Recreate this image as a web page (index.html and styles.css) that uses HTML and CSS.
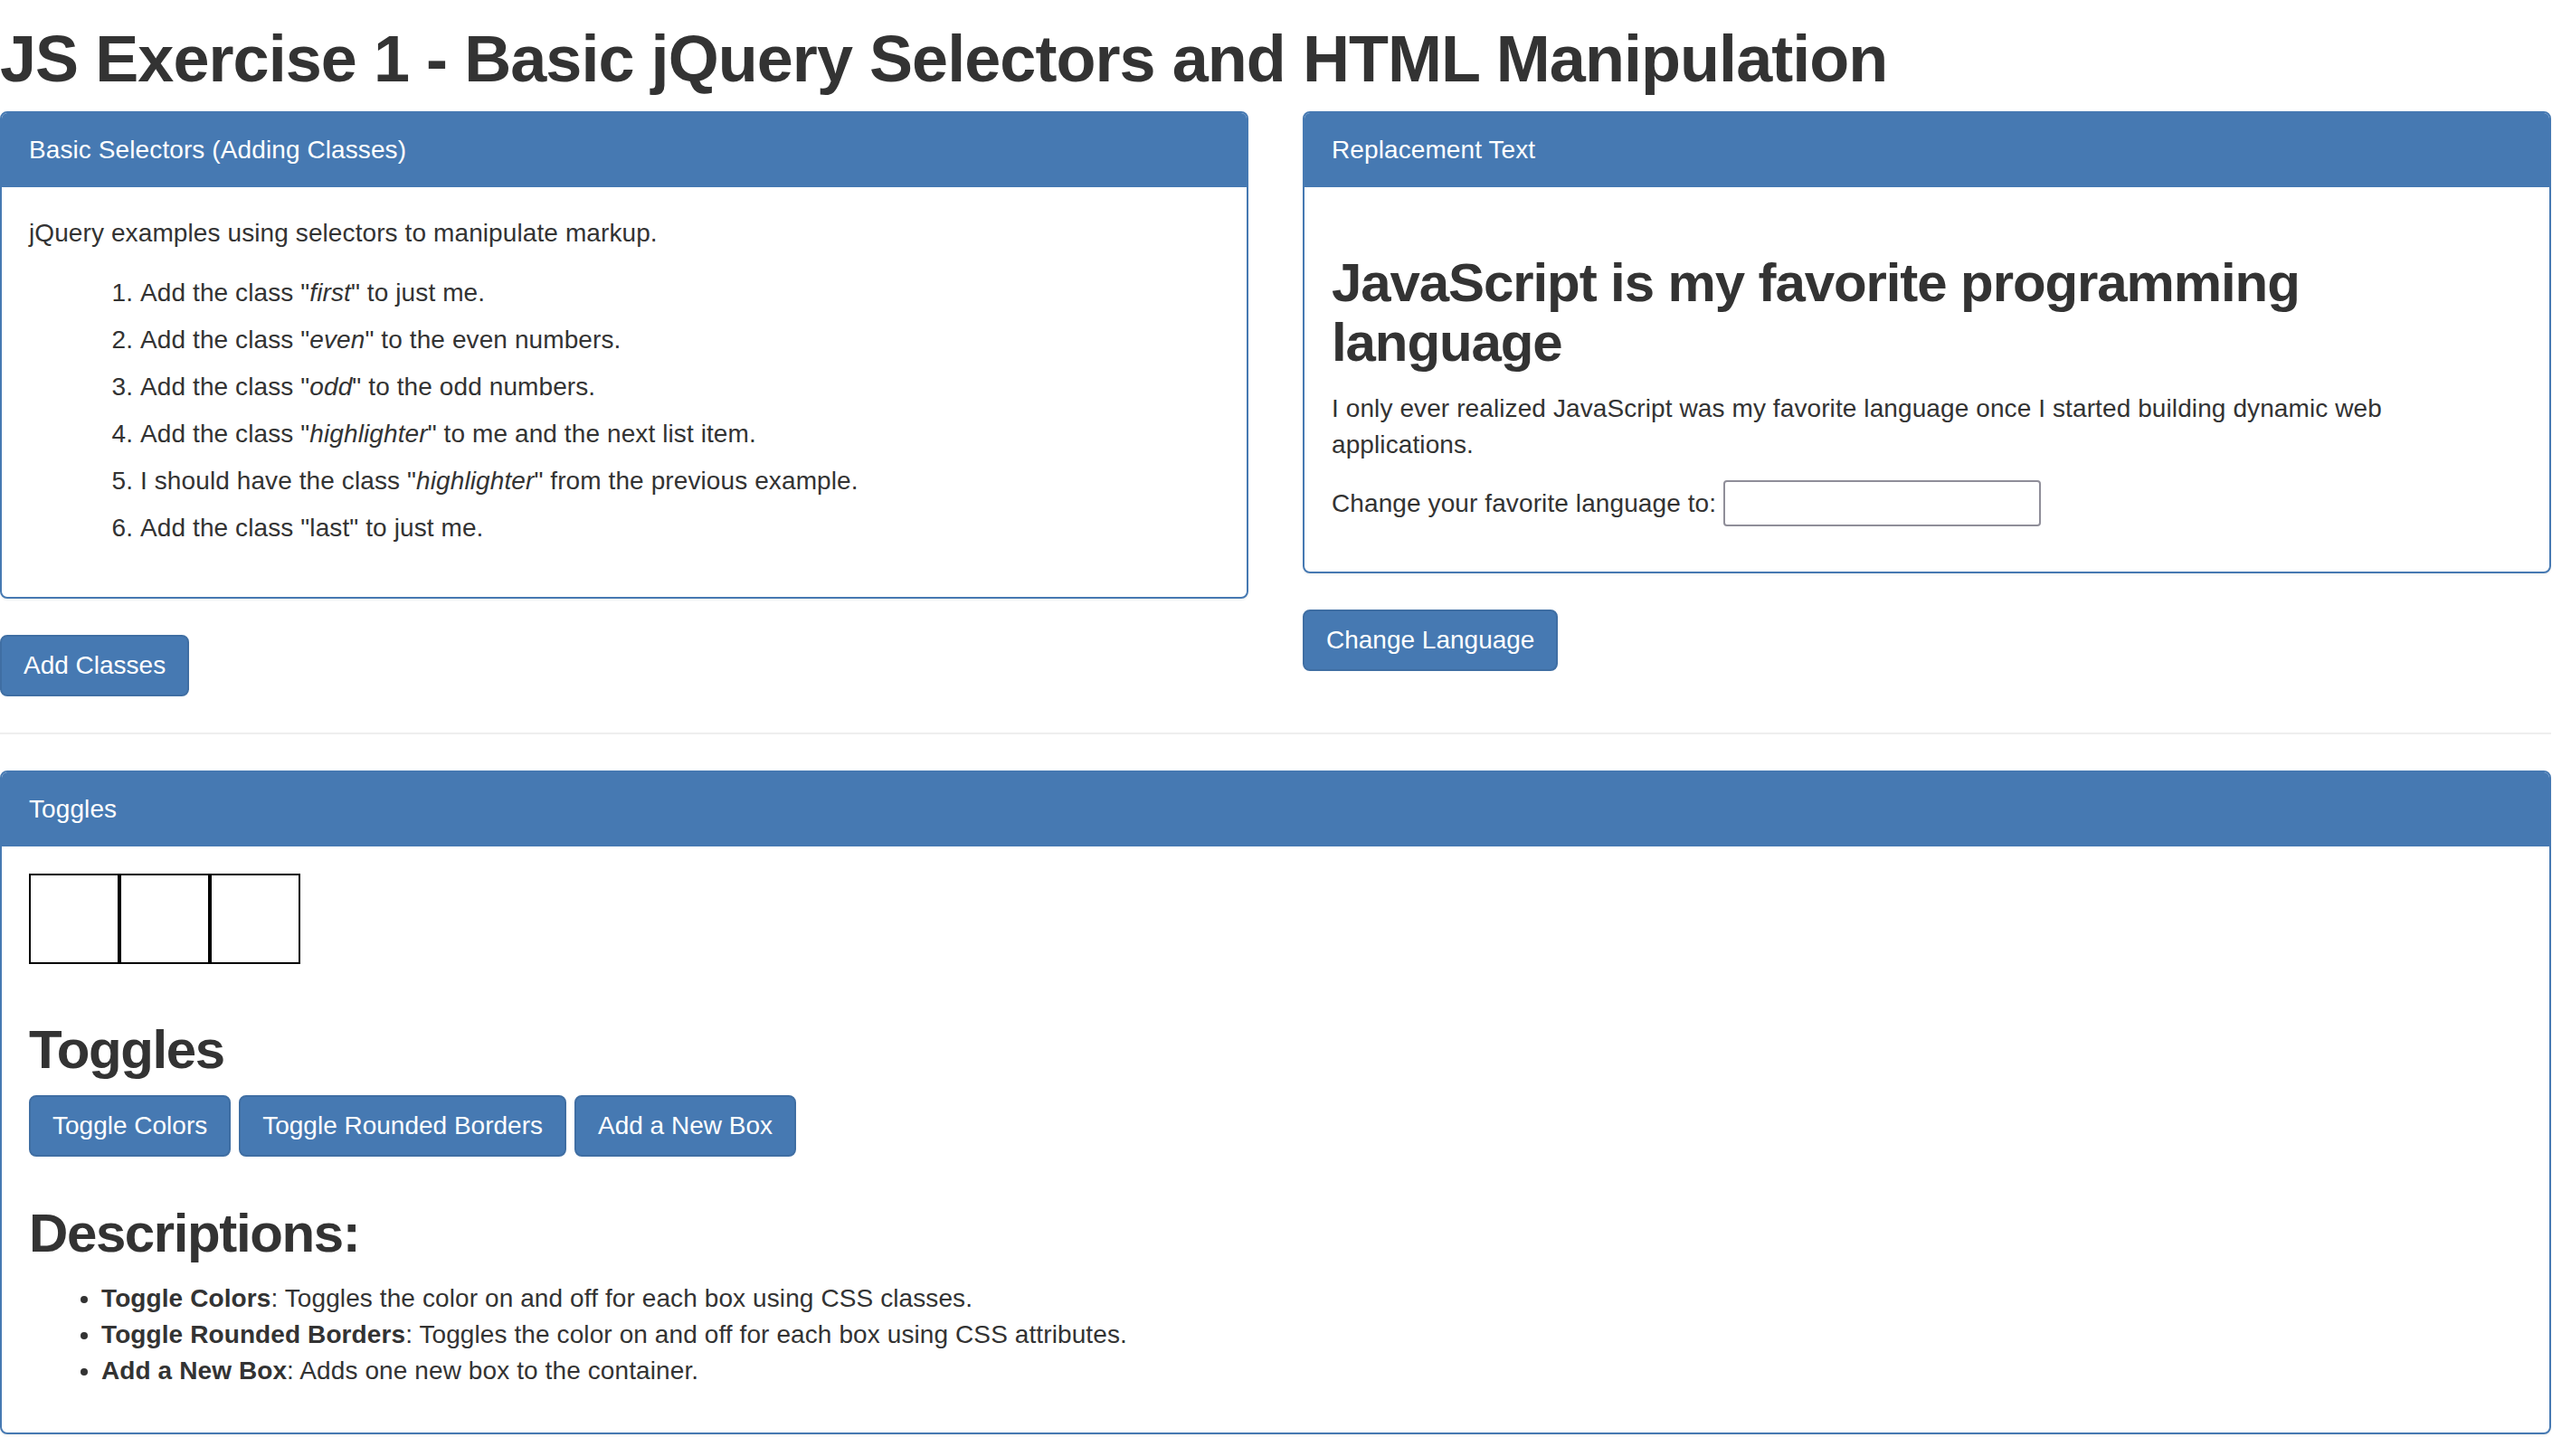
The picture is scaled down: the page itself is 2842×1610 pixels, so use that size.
FILE: index.html
```html
<!DOCTYPE html>
<html lang="en">
<head>
<meta charset="utf-8">
<title>JS Exercise 1</title>
<link rel="stylesheet" href="styles.css">
</head>
<body>
<div class="page">
  <h1 class="title">JS Exercise 1 - Basic jQuery Selectors and HTML Manipulation</h1>
  <div class="row">
    <div class="col">
      <div class="panel">
        <div class="panel-heading">Basic Selectors (Adding Classes)</div>
        <div class="panel-body">
          <p class="intro">jQuery examples using selectors to manipulate markup.</p>
          <ol class="steps">
            <li>Add the class "<em>first</em>" to just me.</li>
            <li>Add the class "<em>even</em>" to the even numbers.</li>
            <li>Add the class "<em>odd</em>" to the odd numbers.</li>
            <li>Add the class "<em>highlighter</em>" to me and the next list item.</li>
            <li>I should have the class "<em>highlighter</em>" from the previous example.</li>
            <li>Add the class "last" to just me.</li>
          </ol>
        </div>
      </div>
      <button class="btn">Add Classes</button>
    </div>
    <div class="col">
      <div class="panel">
        <div class="panel-heading">Replacement Text</div>
        <div class="panel-body">
          <h2 class="lang-title">JavaScript is my favorite programming language</h2>
          <p class="lang-text">I only ever realized JavaScript was my favorite language once I started building dynamic web applications.</p>
          <div class="lang-form">
            <label class="lang-label">Change your favorite language to:</label>
            <input class="lang-input" type="text">
          </div>
        </div>
      </div>
      <button class="btn">Change Language</button>
    </div>
  </div>
  <hr class="divider">
  <div class="panel panel-wide">
    <div class="panel-heading">Toggles</div>
    <div class="panel-body">
      <div class="boxes">
        <div class="box"></div>
        <div class="box"></div>
        <div class="box"></div>
      </div>
      <h2 class="section-title">Toggles</h2>
      <div class="btn-group">
        <button class="btn">Toggle Colors</button>
        <button class="btn">Toggle Rounded Borders</button>
        <button class="btn">Add a New Box</button>
      </div>
      <h2 class="section-title desc-title">Descriptions:</h2>
      <ul class="desc-list">
        <li><strong>Toggle Colors</strong>: Toggles the color on and off for each box using CSS classes.</li>
        <li><strong>Toggle Rounded Borders</strong>: Toggles the color on and off for each box using CSS attributes.</li>
        <li><strong>Add a New Box</strong>: Adds one new box to the container.</li>
      </ul>
    </div>
  </div>
</div>
</body>
</html>
```

FILE: styles.css
```css
html, body {
  margin: 0;
  padding: 0;
  background: #fff;
}
body {
  font-family: "Liberation Sans", Arial, Helvetica, sans-serif;
  font-size: 28px;
  line-height: 40px;
  color: #333;
  letter-spacing: 0.1px;
}
.page {
  width: 2820px;
}
.title {
  margin: 26px 0 18px 0;
  font-size: 72px;
  line-height: 79px;
  font-weight: 700;
  color: #333;
  letter-spacing: -0.95px;
}
.row {
  display: grid;
  grid-template-columns: 1380px 1380px;
  column-gap: 60px;
  align-items: start;
}
.col {
  display: flex;
  flex-direction: column;
  align-items: flex-start;
}
.panel {
  align-self: stretch;
  border: 2px solid #4679b2;
  border-radius: 8px;
  background: #fff;
  box-shadow: 0 2px 2px rgba(0,0,0,0.05);
  margin-bottom: 40px;
}
.panel-heading {
  background: #4679b2;
  color: #fff;
  padding: 21px 30px 19px 30px;
  line-height: 40px;
  border-bottom: 2px solid #4679b2;
  border-radius: 6px 6px 0 0;
}
.panel-body {
  padding: 30px;
}
.intro {
  margin: 0 0 20px 0;
  padding-top: 1px;
}
.steps {
  margin: 0 0 20px 0;
  padding-left: 123px;
}
.steps li {
  padding: 6px 0;
}
.btn {
  font-family: inherit;
  font-size: 28px;
  line-height: 40px;
  letter-spacing: 0;
  color: #fff;
  background: #4679b2;
  border: 2px solid #3f6ea3;
  border-radius: 8px;
  padding: 12px 24px;
  margin: 0;
  cursor: pointer;
}
.lang-title {
  margin: 43px 0 20px 0;
  font-size: 60px;
  line-height: 66px;
  font-weight: 700;
  letter-spacing: -1.1px;
}
.lang-text {
  margin: 0 0 19px 0;
}
.lang-form {
  display: flex;
  align-items: center;
  margin-bottom: 20px;
}
.lang-label {
  margin-right: 8px;
}
.lang-input {
  width: 351px;
  height: 51px;
  box-sizing: border-box;
  border: 2px solid #8f8e99;
  border-radius: 4px;
  padding: 0 6px;
  font-family: inherit;
  font-size: 26px;
  margin: 0;
}
.divider {
  margin: 40px 0;
  border: 0;
  border-top: 2px solid #eee;
  height: 0;
}
.panel-wide {
  margin-bottom: 20px;
}
.boxes {
  display: flex;
  margin-bottom: 62px;
}
.box {
  width: 100px;
  height: 100px;
  box-sizing: border-box;
  border: 2px solid #000;
}
.section-title {
  margin: 0 0 17px 0;
  font-size: 60px;
  line-height: 66px;
  font-weight: 700;
  letter-spacing: -1.4px;
}
.btn-group {
  display: flex;
  gap: 9px;
}
.desc-title {
  margin-top: 52px;
  margin-bottom: 19px;
}
.desc-list {
  margin: 0 0 18px 0;
  padding-left: 80px;
}
```
